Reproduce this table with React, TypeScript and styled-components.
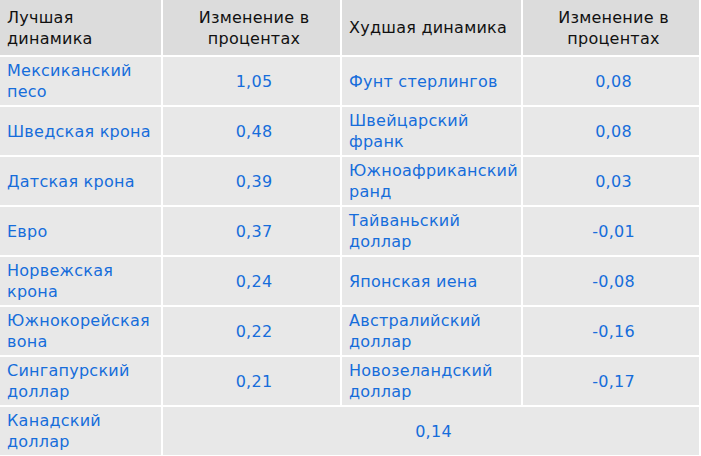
import React from "react";
import styled, { createGlobalStyle } from "styled-components";

const GlobalStyle = createGlobalStyle`
  html, body {
    margin: 0;
    padding: 0;
    background: #ffffff;
  }
`;

const Table = styled.div`
  display: grid;
  grid-template-columns: 161px 177px 179px 176px;
  grid-template-rows: 55px repeat(8, 48px);
  gap: 2px;
  width: 699px;
  padding-right: 2px;
  background: #ffffff;
  font-family: "DejaVu Sans", Verdana, sans-serif;
  font-size: 16px;
  letter-spacing: 0.25px;
  line-height: 21px;
`;

const Cell = styled.div<{ $head?: boolean; $center?: boolean; $span?: number }>`
  display: flex;
  align-items: center;
  justify-content: ${(p) => (p.$center ? "center" : "flex-start")};
  text-align: ${(p) => (p.$center ? "center" : "left")};
  padding: 0 2px 0 7px;
  background: ${(p) => (p.$head ? "#dcdcdc" : "#e8e8e8")};
  color: ${(p) => (p.$head ? "#111111" : "#166ddb")};
  grid-column: ${(p) => (p.$span ? `span ${p.$span}` : "auto")};
`;

interface Row {
  best: string;
  bestVal: string;
  worst: string;
  worstVal: string;
}

const rows: Row[] = [
  { best: "Мексиканский песо", bestVal: "1,05", worst: "Фунт стерлингов", worstVal: "0,08" },
  { best: "Шведская крона", bestVal: "0,48", worst: "Швейцарский франк", worstVal: "0,08" },
  { best: "Датская крона", bestVal: "0,39", worst: "Южноафриканский ранд", worstVal: "0,03" },
  { best: "Евро", bestVal: "0,37", worst: "Тайваньский доллар", worstVal: "-0,01" },
  { best: "Норвежская крона", bestVal: "0,24", worst: "Японская иена", worstVal: "-0,08" },
  { best: "Южнокорейская вона", bestVal: "0,22", worst: "Австралийский доллар", worstVal: "-0,16" },
  { best: "Сингапурский доллар", bestVal: "0,21", worst: "Новозеландский доллар", worstVal: "-0,17" },
];

function App() {
  return (
    <>
      <GlobalStyle />
      <Table>
        <Cell $head>Лучшая динамика</Cell>
        <Cell $head $center>Изменение в процентах</Cell>
        <Cell $head>Худшая динамика</Cell>
        <Cell $head $center>Изменение в процентах</Cell>
        {rows.map((r) => (
          <React.Fragment key={r.best}>
            <Cell>{r.best}</Cell>
            <Cell $center>{r.bestVal}</Cell>
            <Cell>{r.worst}</Cell>
            <Cell $center>{r.worstVal}</Cell>
          </React.Fragment>
        ))}
        <Cell>Канадский доллар</Cell>
        <Cell $center $span={3}>0,14</Cell>
      </Table>
    </>
  );
}

export default App;
